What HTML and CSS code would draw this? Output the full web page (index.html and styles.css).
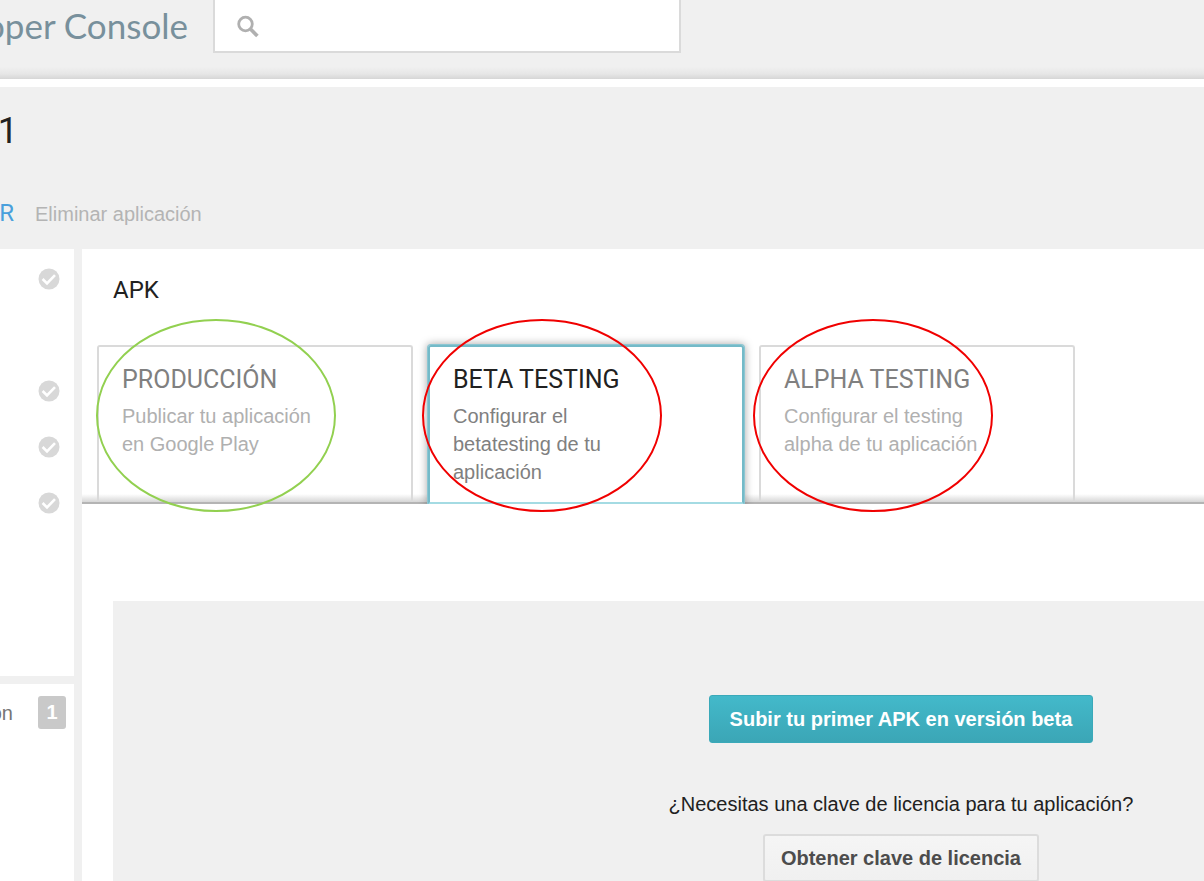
FILE: index.html
```html
<!DOCTYPE html>
<html lang="es">
<head>
<meta charset="utf-8">
<meta name="viewport" content="width=device-width, initial-scale=1">
<title>Developer Console</title>
<link rel="stylesheet" href="styles.css">
</head>
<body>
<svg class="sprite" aria-hidden="true">
  <symbol id="check" viewBox="0 0 22 22"><circle cx="11" cy="11" r="10.5" fill="#d8d8d8"/><path d="M4.6 11l4.4 4.4 8-8.2" fill="none" stroke="#fff" stroke-width="2.6"/></symbol>
</svg>
<header class="topbar">
  <div class="brand"><span>oper Console</span></div>
  <form class="search" role="search">
    <svg class="search-icon" viewBox="0 0 24 24" aria-hidden="true"><circle cx="9.5" cy="10" r="6.8" fill="none" stroke="#b0b0b0" stroke-width="2.8"/><path d="M14 14.6l7.4 7.4" stroke="#b0b0b0" stroke-width="3.6"/></svg>
    <input class="search-input" type="text" aria-label="Buscar">
  </form>
</header>
<section class="app-header">
  <h1 class="app-title">1</h1>
  <div class="app-actions">
    <a class="action-main" href="#publicar">R</a>
    <a class="action-delete" href="#eliminar">Eliminar aplicación</a>
  </div>
</section>
<div class="layout">
  <aside class="sidebar">
    <ul class="steps">
      <li class="step"><svg class="check"><use href="#check"/></svg></li>
      <li class="step"></li>
      <li class="step"><svg class="check"><use href="#check"/></svg></li>
      <li class="step"><svg class="check"><use href="#check"/></svg></li>
      <li class="step"><svg class="check"><use href="#check"/></svg></li>
    </ul>
    <div class="side-more">
      <a class="side-link" href="#optimizacion"><span>ón</span><span class="badge">1</span></a>
    </div>
  </aside>
  <main class="panel">
    <h2 class="panel-title">APK</h2>
    <nav class="tabs">
      <a class="tab" href="#produccion">
        <span class="tab-title">PRODUCCIÓN</span>
        <span class="tab-text">Publicar tu aplicación en Google Play</span>
        <span class="ring ring-green"></span>
      </a>
      <a class="tab tab-active" href="#beta" aria-current="page">
        <span class="tab-title">BETA TESTING</span>
        <span class="tab-text">Configurar el betatesting de tu aplicación</span>
        <span class="ring ring-red"></span>
      </a>
      <a class="tab" href="#alpha">
        <span class="tab-title">ALPHA TESTING</span>
        <span class="tab-text">Configurar el testing alpha de tu aplicación</span>
        <span class="ring ring-red"></span>
      </a>
    </nav>
    <section class="empty">
      <div class="empty-content">
        <button class="btn btn-primary" type="button">Subir tu primer APK en versión beta</button>
        <p class="question">¿Necesitas una clave de licencia para tu aplicación?</p>
        <button class="btn btn-plain" type="button">Obtener clave de licencia</button>
      </div>
    </section>
  </main>
</div>
</body>
</html>
```
FILE: styles.css
```css
* { box-sizing: border-box; }
body {
  margin: 0;
  height: 100vh;
  overflow: hidden;
  display: flex;
  flex-direction: column;
  background: #f0f0f0;
  color: #212121;
  font: 20px/28px "Liberation Sans", Arial, sans-serif;
}
a { color: inherit; text-decoration: none; }
h1, h2, p, ul { margin: 0; padding: 0; font-weight: 400; }
.sprite { position: absolute; width: 0; height: 0; }

.topbar {
  flex: none;
  display: flex;
  align-items: flex-start;
  gap: 25px;
  padding-bottom: 26px;
  border-bottom: 8px solid #fff;
  background: linear-gradient(to top, #d6d6d6, #e6e6e6 5px, #f0f0f0 12px);
  background-clip: padding-box;
}
.brand {
  flex: none;
  width: 188px;
  display: flex;
  justify-content: flex-end;
  white-space: nowrap;
  font: 35px/51px Lato, sans-serif;
  color: #78909c;
}
.search {
  flex: 0 1 468px;
  display: flex;
  align-items: center;
  gap: 12px;
  height: 53px;
  padding-left: 21px;
  background: #fff;
  border: 2px solid #dadada;
  border-top: 0;
}
.search-icon { flex: none; width: 24px; height: 24px; }
.search-input {
  flex: 1;
  min-width: 0;
  height: 40px;
  border: 0;
  outline: 0;
  background: none;
  font: inherit;
}

.app-header { flex: none; padding: 22px 0 19px; }
.app-title { font: 36px/44px Roboto, sans-serif; width: 18px; display: flex; justify-content: flex-end; }
.app-actions { display: flex; align-items: baseline; gap: 21px; margin-top: 44px; line-height: 32px; }
.action-main {
  width: 14px;
  display: flex;
  justify-content: flex-end;
  font: 24px/32px Roboto, sans-serif;
  color: #4aa0dc;
}
.action-delete { color: #b4b4b4; }

.layout { flex: 1; min-height: 0; display: flex; gap: 8px; }
.sidebar { flex: none; width: 74px; display: flex; flex-direction: column; gap: 8px; }
.steps { list-style: none; background: #fff; padding: 2px 14px 145px 0; }
.step { height: 56px; display: flex; align-items: center; justify-content: flex-end; }
.check { width: 22px; height: 22px; }
.side-more { flex: 1; background: #fff; padding: 12px 8px; }
.side-link { display: flex; align-items: center; justify-content: flex-end; gap: 25px; color: #757575; }
.badge {
  flex: none;
  width: 28px;
  border-radius: 3px;
  background: #c9c9c9;
  color: #fff;
  font-weight: 700;
  line-height: 33px;
  text-align: center;
}

.panel { flex: 1; min-width: 0; display: flex; flex-direction: column; background: #fff; }
.panel-title { padding: 25px 31px 0; font: 24px/32px Roboto, sans-serif; }
.tabs {
  display: flex;
  gap: 15px;
  margin-top: 39px;
  padding-left: 15px;
  border-bottom: 2px solid #b4b4b4;
  background: linear-gradient(to top, #d6d6d6, #ffffff 8px);
}
.tab {
  position: relative;
  flex: 0 1 316px;
  height: 157px;
  padding: 17px 80px 0 23px;
  border: 2px solid #dadada;
  border-bottom: 0;
  border-radius: 3px 3px 0 0;
  background: linear-gradient(to top, #d6d6d6, #ffffff 8px);
  color: #b0b0b0;
}
.tab-title { display: block; margin-bottom: 6px; font: 25px/32px Roboto, sans-serif; color: #808080; white-space: nowrap; }
.tab-text { display: block; }
.tab-active {
  height: 159px;
  margin-bottom: -2px;
  border-color: #74bac8;
  border-bottom: 2px solid #a4dbe3;
  background: #fff;
  color: #808080;
}
.tab-active::before {
  content: "";
  position: absolute;
  inset: -2px;
  border-radius: 3px 3px 0 0;
  box-shadow: 0 0 0 1px #8cc6d2, 0 0 8px 1px rgba(0, 0, 0, .35);
  clip-path: inset(-12px -12px 0);
}
.tab-active .tab-title { color: #212121; }

/* Oval highlights drawn over the tabs */
.ring {
  position: absolute;
  z-index: 1;
  left: -8px;
  top: -28px;
  width: 240px;
  height: 193px;
  border: 2px solid #f00000;
  border-radius: 50%;
  pointer-events: none;
}
.ring-green { left: -3px; border-color: #92d050; }

.empty {
  flex: 1;
  margin: 97px 0 0 31px;
  padding-top: 94px;
  display: grid;
  grid-template-columns: 4fr 5fr;
  background: #f0f0f0;
}
.empty-content { grid-column: 2; display: flex; flex-direction: column; align-items: center; }
.btn { height: 48px; border-radius: 3px; font: 700 20px/28px "Liberation Sans", Arial, sans-serif; white-space: nowrap; }
.btn-primary {
  padding: 0 20px;
  border: 1px solid #3aa9b9;
  background: linear-gradient(#43b9ca, #3ba6b6);
  color: #fff;
}
.question { margin: 47px 0 16px; white-space: nowrap; }
.btn-plain {
  padding: 0 16px;
  border: 2px solid #dcdcdc;
  background: linear-gradient(#f5f5f5, #f0f0f0);
  color: #4c4c4c;
}
```
